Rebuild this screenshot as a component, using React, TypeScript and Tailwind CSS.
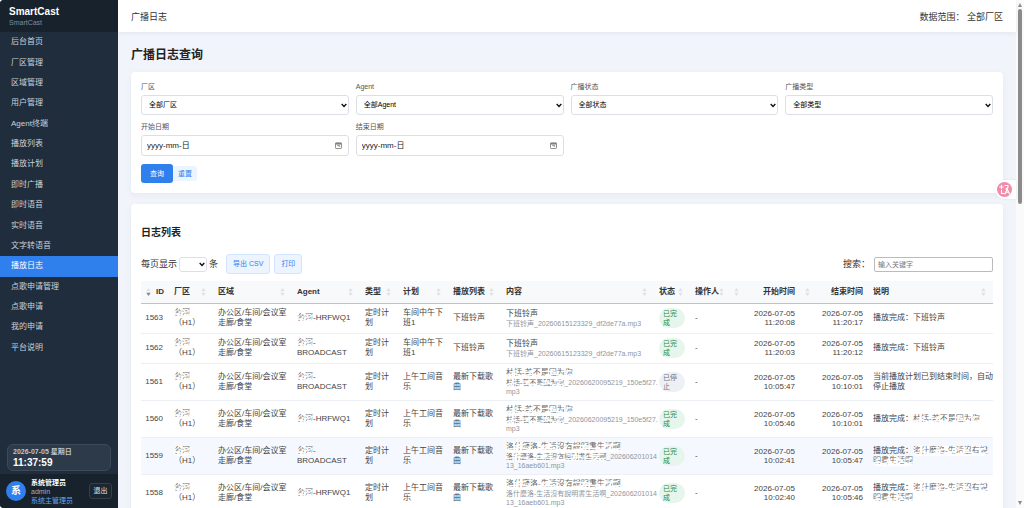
import React from 'react';
import { clsx } from 'clsx';

const navItems = [
  '后台首页', '厂区管理', '区域管理', '用户管理', 'Agent终端', '播放列表', '播放计划', '即时广播',
  '即时语音', '实时语音', '文字转语音', '播放日志', '点歌申请管理', '点歌申请', '我的申请', '平台说明',
];

const selects = [
  { id: 'plant', label: '厂区', value: '全部厂区' },
  { id: 'agent', label: 'Agent', value: '全部Agent' },
  { id: 'status', label: '广播状态', value: '全部状态' },
  { id: 'type', label: '广播类型', value: '全部类型' },
];

const dates = [
  { id: 'start', label: '开始日期' },
  { id: 'end', label: '结束日期' },
];

const columns = [
  { name: 'ID', col: 'w-[28px]', reverse: true },
  { name: '厂区', col: 'w-[44px]' },
  { name: '区域', col: 'w-[79px]' },
  { name: 'Agent', col: 'w-[68px]' },
  { name: '类型', col: 'w-[38px]' },
  { name: '计划', col: 'w-[50px]' },
  { name: '播放列表', col: 'w-[53px]' },
  { name: '内容', col: 'w-[153px]' },
  { name: '状态', col: 'w-[36px]' },
  { name: '操作人', col: 'w-[39px]' },
  { name: '开始时间', col: 'w-[71px]', reverse: true },
  { name: '结束时间', col: 'w-[68px]', reverse: true },
  { name: '说明', col: 'w-[125px]' },
];

interface Log {
  id: number;
  agent: string;
  plan: string;
  playlist: string;
  title: string;
  masked: boolean;
  fileMask?: string;
  file: string[];
  done: boolean;
  start: string;
  end: string;
  note: string;
  noteMask?: string[];
}

const song1 = '林恬-若不是因为你';
const song2 = '洛什麼洛-生活沒有說明書生活啊';

const logs: Log[] = [
  {
    id: 1563, agent: 'HRFWQ1', plan: '车间中午下班1', playlist: '下班铃声', title: '下班铃声', masked: false,
    file: ['下班铃声_20260615123329_df2de77a.mp3'], done: true, start: '11:20:08', end: '11:20:17', note: '播放完成：下班铃声',
  },
  {
    id: 1562, agent: 'BROADCAST', plan: '车间中午下班1', playlist: '下班铃声', title: '下班铃声', masked: false,
    file: ['下班铃声_20260615123329_df2de77a.mp3'], done: true, start: '11:20:03', end: '11:20:12', note: '播放完成：下班铃声',
  },
  {
    id: 1561, agent: 'BROADCAST', plan: '上午工间音乐', playlist: '最新下载歌曲', title: song1, masked: true, fileMask: song1,
    file: ['_20260620095219_150e5f27.', 'mp3'], done: false, start: '10:05:47', end: '10:10:01', note: '当前播放计划已到结束时间，自动停止播放',
  },
  {
    id: 1560, agent: 'HRFWQ1', plan: '上午工间音乐', playlist: '最新下载歌曲', title: song1, masked: true, fileMask: song1,
    file: ['_20260620095219_150e5f27.', 'mp3'], done: true, start: '10:05:46', end: '10:10:01', note: '播放完成：', noteMask: [song1],
  },
  {
    id: 1559, agent: 'BROADCAST', plan: '上午工间音乐', playlist: '最新下载歌曲', title: song2, masked: true, fileMask: song2,
    file: ['_202606201014', '13_16aeb601.mp3'], done: true, start: '10:02:41', end: '10:05:47', note: '播放完成：', noteMask: ['洛什麼洛-生活沒有說', '明書生活啊'],
  },
  {
    id: 1558, agent: 'HRFWQ1', plan: '上午工间音乐', playlist: '最新下载歌曲', title: song2, masked: true,
    file: [song2 + '_202606201014', '13_16aeb601.mp3'], done: true, start: '10:02:40', end: '10:05:46', note: '播放完成：', noteMask: ['洛什麼洛-生活沒有說', '明書生活啊'],
  },
];

// Text partly wiped out by white strokes
const Masked: React.FC<{ text: string; patch?: boolean }> = ({ text, patch }) => (
  <span className={clsx('relative inline-block whitespace-nowrap text-[#666]', patch && 'rounded-full bg-white')}>
    {text}
    <svg className="absolute inset-0 h-full w-full" viewBox="0 0 80 10" preserveAspectRatio="none" fill="none" stroke="white" strokeWidth="1.4" aria-hidden="true">
      <path d="M0 7.5 10 5.5 18 8 30 6.5 44 8.5 58 6 70 8 80 6.5M5 4 14 2.5M22 4.5 34 3.5M48 3 60 4.5M66 3.5 78 2.5M7 9 9 2M27 8 31 2M40 9 43 3M53 8 56 1M71 9 74 2" />
    </svg>
  </span>
);

const Chevron: React.FC<{ className: string }> = ({ className }) => (
  <svg className={clsx('pointer-events-none absolute h-[5px] w-[6px]', className)} viewBox="0 0 6 5" fill="none" stroke="#111" strokeWidth="1.4" aria-hidden="true">
    <path d="M.7 1 3 3.5 5.3 1" />
  </svg>
);

const SortIcon: React.FC<{ active?: boolean }> = ({ active }) => (
  <svg className="h-[10px] w-[5px] shrink-0" viewBox="0 0 5 10" aria-hidden="true">
    <path d="M2.5 1 4.7 4.3H.3Z" fill="#dfe1e5" />
    <path d="M2.5 9 4.7 5.7H.3Z" fill={active ? '#85888d' : '#dfe1e5'} />
  </svg>
);

const Sidebar: React.FC = () => (
  <aside className="flex w-[118px] shrink-0 flex-col bg-[#1f2d3d] text-white">
    <div className="h-8 bg-[#18222c] px-[9px] pt-[6px]">
      <div className="text-[10px] leading-[12px] font-bold">SmartCast</div>
      <div className="text-[7px] leading-[9px] text-[#7f8b98]">SmartCast</div>
    </div>
    <nav className="flex h-[326px] flex-col">
      {navItems.map((item) => (
        <a
          key={item}
          href="#"
          className={clsx('flex flex-1 items-center pl-[11px] text-[8px] leading-[10px]', item === '播放日志' ? 'bg-[#2f80ed] text-white' : 'text-[#c9d2dc]')}
        >
          {item}
        </a>
      ))}
    </nav>
    <div className="mx-[7px] mt-auto mb-[3px] rounded-[6px] border border-[#3d4a59] bg-[#2d3a4a] px-[5px] py-[1px]">
      <div className="pt-[1px] text-[7px] leading-[10px] font-bold text-[#bcc6d1]">2026-07-05 星期日</div>
      <div className="text-[10px] leading-[12px] font-bold">11:37:59</div>
    </div>
    <div className="flex h-[34px] items-center bg-[#18222c] px-[6px]">
      <div className="flex h-5 w-5 items-center justify-center rounded-full bg-[#2f80ed] text-[10px] leading-[10px] font-bold">系</div>
      <div className="ml-[5px] flex-1 text-[7px] leading-[9px] whitespace-nowrap">
        <div className="font-bold">系统管理员</div>
        <div className="text-[#a6b0bb]">admin</div>
        <div className="text-[#5fa8f5]">系统主管理员</div>
      </div>
      <button className="h-4 w-[23px] rounded-[3px] border border-[#333f4b] bg-[#1c2630] text-[7px] leading-[8px] text-[#dfe5ec]">退出</button>
    </div>
  </aside>
);

const FilterCard: React.FC = () => (
  <form className="mt-[9px] rounded-[4px] bg-white p-[10px] shadow-[0_2px_6px_rgba(30,50,90,0.06)]">
    <div className="grid grid-cols-4 gap-[7px]">
      {selects.map((s) => (
        <div key={s.id}>
          <label htmlFor={s.id} className="block text-[7px] leading-[10px] text-[#555]">{s.label}</label>
          <div className="relative mt-[3px]">
            <select id={s.id} className="block h-5 w-full appearance-none rounded-[3px] border border-[#dcdfe6] bg-white pl-[7px] text-[7px] leading-[10px] text-black">
              <option>{s.value}</option>
            </select>
            <Chevron className="top-[8px] right-[2px]" />
          </div>
        </div>
      ))}
      {dates.map((d) => (
        <div key={d.id}>
          <label htmlFor={d.id} className="block text-[7px] leading-[10px] text-[#555]">{d.label}</label>
          <div className="relative mt-[3px]">
            <input id={d.id} type="text" placeholder="yyyy-mm-日" className="block h-[21px] w-full rounded-[3px] border border-[#dcdfe6] bg-white pl-[5px] text-[8px] leading-[10px] placeholder:text-[#222]" />
            <svg className="pointer-events-none absolute top-[7px] right-[7px] h-[7px] w-[7px]" viewBox="0 0 7 7" fill="none" stroke="#777" aria-hidden="true">
              <rect x=".5" y=".8" width="6" height="5.7" rx=".6" strokeWidth=".8" />
              <path d="M.5 1.8H6.5" strokeWidth="1.4" />
              <path d="M3.5 4.3H5.3M2 3.4H5" strokeWidth=".7" />
            </svg>
          </div>
        </div>
      ))}
    </div>
    <div className="mt-[8px] flex items-center">
      <button type="button" className="h-[19px] w-8 rounded-[3px] bg-[#2f80ed] text-[7px] leading-[10px] text-white">查询</button>
      <a href="#" className="rounded-r-[3px] bg-[#ecf4ff] px-[5px] py-[3px] text-[7px] leading-[9px] text-[#2f80ed]">重置</a>
    </div>
  </form>
);

const LogRow: React.FC<{ log: Log }> = ({ log }) => {
  const hovered = log.id === 1559;
  return (
    <tr className={clsx('h-[30px] border-b border-[#eceff4] align-middle', hovered && 'bg-[#f5f9ff]')}>
      <td className="pr-[6px] text-right">{log.id}</td>
      <td className="px-[5px]"><Masked text="台河" patch={hovered} />（H1）</td>
      <td className="pl-[5px] whitespace-nowrap">办公区/车间/会议室<br />走廊/食堂</td>
      <td className="px-[5px]"><Masked text="台河" patch={hovered} />-{log.agent === 'BROADCAST' && <br />}{log.agent}</td>
      <td className="px-[5px]">定时计划</td>
      <td className="px-[5px]">{log.plan}</td>
      <td className="px-[5px]">{log.playlist}</td>
      <td className="py-[4px] pl-[5px] whitespace-nowrap">
        <div>{log.masked ? <Masked text={log.title} patch={hovered} /> : log.title}</div>
        <div className="text-[7px] leading-[9px] text-[#8f959e]">
          {log.fileMask && <Masked text={log.fileMask} patch={hovered} />}
          {log.file[0]}
          {log.file[1] && <><br />{log.file[1]}</>}
        </div>
      </td>
      <td className="px-[5px]">
        <span className={clsx('block rounded-full px-[4px] py-[1px] text-[7px] leading-[9px]', log.done ? 'bg-[#e6f6ec] text-[#238a48]' : 'bg-[#edf0f5] text-[#6b7280]')}>
          {log.done ? '已完成' : '已停止'}
        </span>
      </td>
      <td className="px-[5px]">-</td>
      <td className="px-[5px] text-right leading-[9px]">2026-07-05 {log.start}</td>
      <td className="px-[5px] text-right leading-[9px]">2026-07-05 {log.end}</td>
      <td className="pl-[5px]">
        {log.note}
        {log.noteMask?.map((part) => <Masked key={part} text={part} patch={hovered} />)}
      </td>
    </tr>
  );
};

const LogCard: React.FC = () => (
  <section className="mt-[11px] rounded-[4px] bg-white px-[10px] pt-[22px] pb-[10px] shadow-[0_2px_6px_rgba(30,50,90,0.06)]">
    <h2 className="text-[10px] leading-[14px] font-bold text-[#222]">日志列表</h2>
    <div className="mt-[14px] flex items-center text-[9px] leading-[12px] text-[#333]">
      <label htmlFor="size">每页显示</label>
      <div className="relative mx-[2px]">
        <select id="size" className="block h-[15px] w-7 appearance-none rounded-[3px] border border-[#dcdfe6] bg-white" />
        <Chevron className="top-[5px] right-[2px]" />
      </div>
      <span>条</span>
      <button className="ml-[8px] h-5 rounded-[3px] border border-[#d3e5fc] bg-[#ecf4ff] px-[6px] text-[7px] leading-[10px] text-[#2f80ed]">导出 CSV</button>
      <button className="ml-[4px] h-5 rounded-[3px] border border-[#d3e5fc] bg-[#ecf4ff] px-[6px] text-[7px] leading-[10px] text-[#2f80ed]">打印</button>
      <label htmlFor="search" className="ml-auto">搜索：</label>
      <input id="search" type="text" placeholder="输入关键字" className="ml-[4px] h-[15px] w-[119px] rounded-[2px] border border-[#bbb] bg-white px-[3px] text-[7px] leading-[10px] placeholder:text-[#777]" />
    </div>
    <table className="mt-[7px] w-full table-fixed border-collapse text-[8px] leading-[10px] text-[#444]">
      <colgroup>
        {columns.map((c) => <col key={c.name} className={c.col} />)}
      </colgroup>
      <thead>
        <tr className="h-[22px] border-b border-[#bfc3c9] bg-[#f8f9fb]">
          {columns.map((c) => (
            <th key={c.name} className={clsx('pl-[5px] font-bold text-[#333]', c.reverse ? 'pr-[5px]' : 'pr-[7px]')}>
              <div className={clsx('flex items-center justify-between whitespace-nowrap', c.reverse && 'flex-row-reverse')}>
                {c.name}
                <SortIcon active={c.name === 'ID'} />
              </div>
            </th>
          ))}
        </tr>
      </thead>
      <tbody>
        {logs.map((log) => <LogRow key={log.id} log={log} />)}
      </tbody>
    </table>
  </section>
);

const App: React.FC = () => (
  <div className="relative flex h-screen overflow-hidden rounded-l-[4px] bg-[#f1f4fa] font-['Liberation_Sans','Noto_Sans_CJK_SC',sans-serif]">
    <Sidebar />
    <div className="flex min-w-0 flex-1 flex-col">
      <header className="z-10 flex h-8 shrink-0 items-center justify-between bg-white px-[13px] pt-[2px] text-[9px] leading-[12px] text-[#333] shadow-[0_1px_5px_rgba(30,50,90,0.08)]">
        <span>广播日志</span>
        <span>数据范围： 全部厂区</span>
      </header>
      <main className="min-h-0 flex-1 overflow-hidden px-[13px] pt-[15px]">
        <h1 className="text-[12px] leading-[16px] font-bold text-[#222]">广播日志查询</h1>
        <FilterCard />
        <LogCard />
      </main>
    </div>
    <div className="flex w-2 shrink-0 flex-col items-center bg-[#fafafa] py-[3px]">
      <svg className="h-[4px] w-[4px]" viewBox="0 0 4 4" aria-hidden="true"><path d="M2 0 4 4H0Z" fill="#8b8b8b" /></svg>
      <div className="mt-[2px] h-[195px] w-[4px] rounded-full bg-[#8b8b8b]" />
      <svg className="mt-auto h-[4px] w-[4px]" viewBox="0 0 4 4" aria-hidden="true"><path d="M2 4 4 0H0Z" fill="#8b8b8b" /></svg>
    </div>
    <button aria-label="翻译" className="absolute top-[180px] right-2 z-20 flex h-[19px] w-[21px] items-center rounded-l-full bg-white pl-[2px] shadow-[0_0_3px_rgba(0,0,0,0.08)]">
      <svg className="h-[15px] w-[15px]" viewBox="0 0 30 30" fill="none" stroke="white" strokeWidth="2.2" strokeLinecap="round" strokeLinejoin="round" aria-hidden="true">
        <circle cx="15" cy="15" r="15" fill="#f08caa" stroke="none" />
        <path d="M5.500 10H12.500M9 6.500V13.500M9 17V23H14M16 7H22V11L18 14M16 24 20.500 14 25 24M18 20.500H23" />
      </svg>
    </button>
  </div>
);

export default App;
